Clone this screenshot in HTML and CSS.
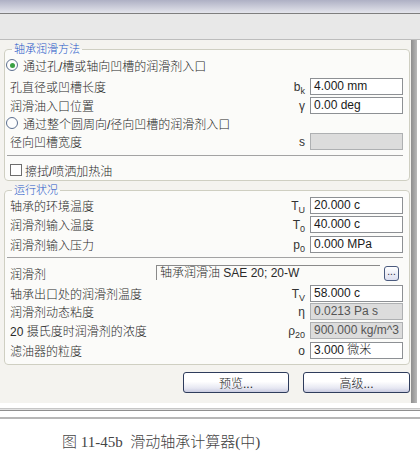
FILE: index.html
```html
<!DOCTYPE html>
<html lang="zh">
<head>
  <meta charset="UTF-8">
  <title>滑动轴承计算器</title>
  <link rel="stylesheet" href="styles.css">
</head>
<body>

  <div class="titlebar"></div>
  <div class="toolbar"></div>

  <div class="window">
    <div class="content">

      <!-- 轴承润滑方法 -->
      <fieldset class="group g1">
        <legend>轴承润滑方法</legend>
        <div class="opt opt1"><span class="radio on"></span>通过孔/槽或轴向凹槽的润滑剂入口</div>
        <div class="row r-first"><span class="label">孔直径或凹槽长度</span><span class="sym">b<sub>k</sub></span><span class="field">4.000 mm</span></div>
        <div class="row"><span class="label">润滑油入口位置</span><span class="sym">γ</span><span class="field">0.00 deg</span></div>
        <div class="opt opt2"><span class="radio"></span>通过整个圆周向/径向凹槽的润滑剂入口</div>
        <div class="row"><span class="label">径向凹槽宽度</span><span class="sym">s</span><span class="field off"></span></div>
        <div class="sep"></div>
        <div class="opt opt3"><span class="check"></span>擦拭/喷洒加热油</div>
      </fieldset>

      <!-- 运行状况 -->
      <fieldset class="group g2">
        <legend>运行状况</legend>
        <div class="row"><span class="label">轴承的环境温度</span><span class="sym">T<sub>U</sub></span><span class="field">20.000 c</span></div>
        <div class="row"><span class="label">润滑剂输入温度</span><span class="sym">T<sub>0</sub></span><span class="field">40.000 c</span></div>
        <div class="row r-p0"><span class="label">润滑剂输入压力</span><span class="sym">p<sub>0</sub></span><span class="field">0.000 MPa</span></div>
        <div class="sep sep2"></div>
        <div class="row combo-row">
          <span class="label short">润滑剂</span>
          <span class="combo">轴承润滑油 SAE 20; 20-W</span>
          <span class="dots">...</span>
        </div>
        <div class="row r-tv"><span class="label">轴承出口处的润滑剂温度</span><span class="sym">T<sub>V</sub></span><span class="field">58.000 c</span></div>
        <div class="row r-eta"><span class="label">润滑剂动态粘度</span><span class="sym">η</span><span class="field off">0.0213 Pa s</span></div>
        <div class="row"><span class="label">20 摄氏度时润滑剂的浓度</span><span class="sym">ρ<sub>20</sub></span><span class="field off">900.000 kg/m^3</span></div>
        <div class="row r-o"><span class="label">滤油器的粒度</span><span class="sym">o</span><span class="field">3.000 微米</span></div>
      </fieldset>

      <div class="buttons">
        <button class="btn btn-preview">预览...</button>
        <button class="btn btn-adv">高级...</button>
      </div>

    </div>
    <div class="scroll"></div>
  </div>

  <div class="rule"></div>
  <div class="rule2"></div>

  <p class="caption">图 11-45b&nbsp;&nbsp;滑动轴承计算器(中)</p>

</body>
</html>
```

FILE: styles.css
```css
body {
  margin: 0;
  width: 420px;
  background: #fff;
  font-family: "Liberation Sans", "Noto Sans CJK SC", sans-serif;
  font-size: 12px;
  font-weight: 300;
  color: #2a2a2a;
}

.titlebar {
  height: 13px;
  background: linear-gradient(#aeb0c4, #e4e5ec);
  border-bottom: 1px solid #7e7e7e;
}

.toolbar {
  height: 25px;
  background: #e8e8e8;
  border-bottom: 1px solid #bcbcbc;
}

.window {
  display: flex;
  height: 363px;
}

.content {
  width: 411px;
  box-sizing: border-box;
  padding: 2px 1px 0 4px;
  background: #f4f3ef;
}

.scroll {
  width: 6px;
  background: linear-gradient(90deg, #8d8d8d, #b9b9b9);
}

/* group boxes */
.group {
  margin: 0;
  padding: 1px 6px 2px 1px;
  border: 1px solid #cfcfc2;
  border-radius: 4px;
  background: #fbfbf9;
}

.group legend {
  margin-left: 6px;
  padding: 0 2px;
  font-size: 11px;
  line-height: 14px;
  color: #2456c8;
}

.g2 {
  margin-top: 2px;
  padding-top: 0;
  padding-bottom: 5px;
}

.opt {
  display: flex;
  align-items: center;
  height: 16px;
  white-space: nowrap;
}

.opt2 {
  margin-top: 1px;
}

.opt3 {
  margin-top: 6px;
  padding-left: 4px;
}

.radio {
  width: 10px;
  height: 10px;
  margin-right: 5px;
  border: 1px solid #5c6f8f;
  border-radius: 50%;
  background: #fdfdfd;
  display: flex;
  align-items: center;
  justify-content: center;
}

.radio.on::after {
  content: '';
  width: 5px;
  height: 5px;
  border-radius: 50%;
  background: #3aa043;
}

.check {
  width: 10px;
  height: 10px;
  margin-right: 3px;
  border: 1px solid #6d6d6d;
  background: #fff;
}

.row {
  display: flex;
  align-items: center;
  height: 17px;
  margin-top: 2px;
  white-space: nowrap;
}

.r-first {
  margin-top: 5px;
}

.g2 .row:first-of-type {
  margin-top: 0;
}

.r-p0 {
  margin-top: 3px;
}

.label {
  flex: 1;
  padding-left: 4px;
}

.label.short {
  flex: none;
  width: 146px;
}

.sym {
  margin-right: 5px;
  color: #333;
}

.sym sub {
  font-size: 9px;
  vertical-align: -3px;
  line-height: 0;
}

.field {
  width: 93px;
  height: 17px;
  box-sizing: border-box;
  padding-left: 3px;
  line-height: 15px;
  border: 1px solid #8d9094;
  background: #fff;
  color: #1a1a1a;
}

.field.off {
  background: #dcdcdc;
  border-color: #aeb0b2;
  color: #555;
}

.sep {
  height: 1px;
  margin: 5px 0 0 1px;
  background: #a3a3a3;
}

.sep2 {
  margin-top: 4px;
}

.combo-row {
  height: 16px;
  margin-top: 7px;
  align-items: flex-start;
}

.combo {
  width: 224px;
  height: 15px;
  box-sizing: border-box;
  padding-left: 3px;
  line-height: 15px;
  border-top: 1px solid #8a8a8a;
  border-left: 1px solid #8a8a8a;
}

.dots {
  width: 15px;
  height: 15px;
  margin: 1px 0 0 4px;
  box-sizing: border-box;
  border: 1px solid #4a5a7e;
  border-radius: 3px;
  background: linear-gradient(#ffffff, #dcdff0);
  font-size: 10px;
  line-height: 10px;
  text-align: center;
  color: #223;
}

.r-tv {
  margin-top: 4px;
}

.r-eta {
  margin-top: 1px;
}

.r-o {
  margin-top: 3px;
}

/* bottom buttons */
.buttons {
  display: flex;
  justify-content: flex-end;
  gap: 14px;
  margin-top: 7px;
}

.btn {
  height: 21px;
  padding: 0;
  border: 1px solid #2e3c5c;
  border-radius: 3px;
  background: linear-gradient(#ffffff 45%, #e6e7f2 80%, #c9cbe0);
  font-family: "Liberation Sans", "Noto Sans CJK SC", sans-serif;
  font-size: 12px;
  font-weight: 300;
  color: #222;
}

.btn-preview {
  width: 106px;
}

.btn-adv {
  width: 107px;
}

.rule {
  height: 1px;
  margin-top: 5px;
  border-top: 1px solid #c6c6c6;
  border-bottom: 1px solid #8f8f8f;
  background: #e2e2e2;
}

.rule2 {
  height: 2px;
  margin-top: 6px;
  background: #b7b7b7;
}

.caption {
  margin: 14px 0 0;
  padding-left: 62px;
  font-family: "Liberation Serif", "Noto Sans CJK SC", serif;
  font-size: 15px;
  font-weight: 300;
  line-height: 18px;
  color: #444;
}
```
